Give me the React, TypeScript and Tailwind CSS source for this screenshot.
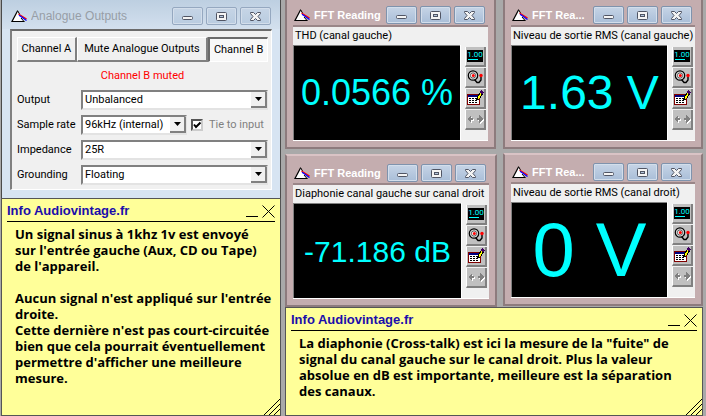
import React, { useState } from 'react';

type Tone = 'blue' | 'rose';

const AppLogo: React.FC = () => (
    <svg width="17" height="13" viewBox="0 0 17 13" className="shrink-0" aria-hidden="true">
        <path d="M6.5 1 L1 11.5 H13 Z" fill="#fff" />
        <path d="M6.5 1 L1 11.5 H13.5" fill="none" stroke="#000" strokeWidth="1.2" />
        <path d="M6.5 0.5 L8.5 4 M10 8 L13 11.5" stroke="#000" />
        <path d="M7.5 4 L15.5 9" stroke="#f00" strokeWidth="1.3" />
        <path d="M8 5.3 L11 7.3 L15.5 10.5" fill="none" stroke="#00f" strokeWidth="1.3" />
    </svg>
);

const CaptionGlyph: React.FC<{ kind: 'min' | 'max' | 'close' }> = ({ kind }) => (
    <svg width="13" height="11" viewBox="0 0 13 11" aria-hidden="true">
        {kind === 'min' && <rect x="1.5" y="5.5" width="10" height="3" rx="1" fill="#f4f4f4" stroke="#505564" />}
        {kind === 'max' && (
            <>
                <rect x="1.5" y="1.5" width="10" height="8" rx="1" fill="#f4f4f4" stroke="#505564" />
                <rect x="4.5" y="4.5" width="4" height="2" fill="#b4c6dc" stroke="#505564" />
            </>
        )}
        {kind === 'close' && (
            <path
                d="M1.5 1.5 H4.5 L6.5 3.5 L8.5 1.5 H11.5 V2.5 L9 5.5 L11.5 8.5 V9.5 H8.5 L6.5 7.5 L4.5 9.5 H1.5 V8.5 L4 5.5 L1.5 2.5 Z"
                fill="#f4f4f4"
                stroke="#505564"
            />
        )}
    </svg>
);

const CaptionButtons: React.FC<{ tone: Tone }> = ({ tone }) => {
    const look =
        tone === 'rose'
            ? 'border-[#7f93ad] from-[#c6d4e6] to-[#a9bed8]'
            : 'border-[#95a8c0] from-[#c6d5e6] to-[#b9cce0]';
    return (
        <div className="flex shrink-0 gap-[3px]">
            {(['min', 'max', 'close'] as const).map((kind) => (
                <button
                    key={kind}
                    type="button"
                    aria-label={kind}
                    className={`flex h-[18px] w-[31px] items-center justify-center rounded-[2px] border bg-linear-to-b shadow-[inset_0_0_0_1px_#d3deeb] ${look}`}
                >
                    <CaptionGlyph kind={kind} />
                </button>
            ))}
        </div>
    );
};

const BellIcon: React.FC = () => (
    <svg width="17" height="14" viewBox="0 0 17 14" aria-hidden="true">
        <circle cx="6" cy="5.5" r="4.7" fill="#d8d8d8" stroke="#000" strokeWidth="1.2" />
        <circle cx="6" cy="5.5" r="2.6" fill="#fff" stroke="#333" strokeWidth="0.8" />
        <circle cx="6.3" cy="5.5" r="1.5" fill="#f00" />
        <path d="M7.5 9.5 L10 12.5 H12 L14 10 V7" fill="none" stroke="#000" strokeWidth="1.4" />
        <circle cx="14" cy="5.5" r="1.7" fill="#f00" />
    </svg>
);

const SheetIcon: React.FC = () => (
    <svg width="17" height="16" viewBox="0 0 17 16" aria-hidden="true" shapeRendering="crispEdges">
        <rect x="0" y="4" width="13" height="11" fill="#800000" />
        <rect x="1" y="5" width="11" height="9" fill="#fff" />
        <rect x="1" y="5" width="11" height="2" fill="#000080" />
        <path d="M2 8.5h9M2 10.5h9M2 12.5h9" stroke="#000" strokeDasharray="2 1" />
        <path d="M9.5 10.5 L10.5 7 L14 1.5 L16 3 L12.5 8.5 Z" fill="#ff0" stroke="#000" />
        <path d="M13.5 1 L16 3.5" stroke="#400060" strokeWidth="2.5" />
    </svg>
);

const ArrowsIcon: React.FC = () => (
    <svg width="17" height="9" viewBox="0 0 17 9" aria-hidden="true" shapeRendering="crispEdges">
        <path d="M1 5 L5 1 V4 H7 V6 H5 V9 Z M17 5 L13 1 V4 H11 V6 H13 V9 Z" fill="#fff" />
        <path d="M0 4 L4 0 V3 H6 V5 H4 V8 Z M16 4 L12 0 V3 H10 V5 H12 V8 Z" fill="#808080" />
    </svg>
);

const ToolButton: React.FC<{ label: string; children: React.ReactNode }> = ({ label, children }) => (
    <button
        type="button"
        aria-label={label}
        className="flex h-5 w-[21px] items-center justify-center border-r-2 border-b-2 border-l border-r-[#808080] border-b-[#808080] border-l-white bg-[#c0c0c0]"
    >
        {children}
    </button>
);

interface ReadingProps {
    title: string;
    label: string;
    value: string;
    valueClass: string;
    className?: string;
    titleClass: string;
}

const ReadingWindow: React.FC<ReadingProps> = ({ title, label, value, valueClass, className = '', titleClass }) => (
    <section className={`border-2 border-[#8d7b7d] bg-[#c4adaf] px-[6px] pb-[6px] ${className}`}>
        <header className={`flex items-center gap-[3px] border-b-2 border-[#9a8688] pr-[3px] pb-px pl-px ${titleClass}`}>
            <AppLogo />
            <h2 className="min-w-0 flex-1 text-[11px] font-bold whitespace-nowrap text-white">{title}</h2>
            <CaptionButtons tone="rose" />
        </header>
        <div className="border-b border-white bg-[#f0f0f0]">
            <p className="h-[18px] pl-[2px] font-['Roboto',sans-serif] text-[11px] leading-[18px] whitespace-nowrap">{label}</p>
            <div className="flex">
                <output
                    className={`flex h-[95px] min-w-0 flex-1 items-center justify-center border-t border-l border-[#808080] bg-black whitespace-nowrap text-[#00ffff] ${valueClass}`}
                >
                    {value}
                </output>
                <div className="flex w-[28px] shrink-0 flex-col gap-px border-l border-white pt-[2px] pl-1">
                    <ToolButton label="Digits">
                        <span className="flex h-[12px] w-[16px] flex-col items-center bg-black font-['Roboto',sans-serif] text-[8px] leading-[9px] text-[#00ffff]">
                            1.00
                            <span className="mr-1 h-px w-[10px] bg-[#00ffff]" />
                        </span>
                    </ToolButton>
                    <ToolButton label="Alarm">
                        <BellIcon />
                    </ToolButton>
                    <ToolButton label="Data">
                        <SheetIcon />
                    </ToolButton>
                    <ToolButton label="Scroll">
                        <ArrowsIcon />
                    </ToolButton>
                </div>
            </div>
        </div>
    </section>
);

const Note: React.FC<{ text: string; className?: string }> = ({ text, className = '' }) => (
    <section className={`relative border border-[#555] bg-[#ffff99] px-[5px] ${className}`}>
        <header className="flex h-[23px] items-center justify-between border-b border-black pt-[2px]">
            <h2 className="text-[13px] font-bold text-[#1a0dab]">Info Audiovintage.fr</h2>
            <div className="flex gap-1">
                <button type="button" aria-label="Minimize">
                    <svg width="12" height="13" viewBox="0 0 12 13" aria-hidden="true">
                        <path d="M0 11.5 H12" stroke="#000" />
                    </svg>
                </button>
                <button type="button" aria-label="Close">
                    <svg width="13" height="13" viewBox="0 0 13 13" aria-hidden="true">
                        <path d="M0.5 0.5 L12.5 12.5 M12.5 0.5 L0.5 12.5" stroke="#000" />
                    </svg>
                </button>
            </div>
        </header>
        <p className="pt-1 pl-2 font-['Open_Sans',sans-serif] text-[13px] leading-4 font-bold whitespace-pre">{text}</p>
        <svg width="16" height="16" viewBox="0 0 16 16" className="absolute right-0 bottom-0" aria-hidden="true">
            <path d="M0 16 L16 0 M5 16 L16 5 M10 16 L16 10" stroke="#000" />
        </svg>
    </section>
);

const Combo: React.FC<{ id: string; options: string[]; className?: string }> = ({ id, options, className = '' }) => (
    <div className={`relative ${className}`}>
        <select
            id={id}
            className="block h-[20px] w-full appearance-none border-2 border-t-[#808080] border-r-[#e3e3e3] border-b-[#e3e3e3] border-l-[#808080] bg-white pl-[2px] text-[11px] leading-4"
        >
            {options.map((o) => (
                <option key={o}>{o}</option>
            ))}
        </select>
        <span className="pointer-events-none absolute inset-y-[2px] right-px flex w-4 items-center justify-center border-r-2 border-b-2 border-[#808080] bg-[#f0f0f0]">
            <svg width="7" height="4" viewBox="0 0 7 4" aria-hidden="true">
                <path d="M0 0 H7 L3.5 4 Z" fill="#000" />
            </svg>
        </span>
    </div>
);

const raised =
    'h-[25px] border-t border-r-2 border-b-2 border-l border-t-white border-r-[#808080] border-b-[#808080] border-l-white bg-[#f0f0f0] whitespace-nowrap';

const AnalogueOutputs: React.FC = () => {
    const [tied, setTied] = useState(true);

    return (
        <section className="border-x border-[#4a4a4a] bg-[#d7e4f2] px-2 pb-2">
            <header className="-mx-2 flex items-center gap-[3px] bg-linear-to-b from-[#bdcfe1] to-[#d3e0ee] pt-[7px] pr-[9px] pb-[4px] pl-[9px]">
                <AppLogo />
                <h2 className="min-w-0 flex-1 truncate text-xs text-[#979ea6]">Analogue Outputs</h2>
                <CaptionButtons tone="blue" />
            </header>
            <div className="border-t-2 border-r border-b border-l-2 border-t-[#6b6b6b] border-r-white border-b-white border-l-[#808080] bg-[#f0f0f0] pt-[6px] pr-[3px] pb-1 pl-[5px] font-['Roboto',sans-serif] text-[11px]">
                <div className="grid grid-cols-[60fr_132fr_60fr]">
                    <button type="button" className={raised}>Channel A</button>
                    <button type="button" className={raised}>Mute Analogue Outputs</button>
                    <button
                        type="button"
                        className="h-[25px] border-t-2 border-r border-b border-l-2 border-t-[#6b6b6b] border-r-white border-b-white border-l-[#6b6b6b] bg-[#f8f8f8] whitespace-nowrap"
                    >
                        Channel B
                    </button>
                </div>
                <p className="py-[6px] text-center leading-4 text-[#f00]">Channel B muted</p>
                <div className="grid grid-cols-[64px_1fr] items-center gap-y-[5px]">
                    <label htmlFor="output">Output</label>
                    <Combo id="output" options={['Unbalanced', 'Balanced']} />
                    <label htmlFor="rate">Sample rate</label>
                    <div className="flex items-center">
                        <Combo id="rate" options={['96kHz (internal)', '48kHz (internal)']} className="w-[106px]" />
                        <label className="ml-1 flex flex-1 items-center gap-[6px] whitespace-nowrap text-[#808080]">
                            <span className="relative flex">
                                <input
                                    type="checkbox"
                                    checked={tied}
                                    onChange={(e) => setTied(e.target.checked)}
                                    className="h-3 w-3 appearance-none border-2 border-t-[#555] border-r-[#ccc] border-b-[#ccc] border-l-[#555] bg-white"
                                />
                                {tied && (
                                    <svg width="12" height="12" viewBox="0 0 12 12" className="pointer-events-none absolute inset-0" aria-hidden="true">
                                        <path d="M3 5.5 L5 8 L9.5 3.5" fill="none" stroke="#000" strokeWidth="2" />
                                    </svg>
                                )}
                            </span>
                            Tie to input
                        </label>
                    </div>
                    <label htmlFor="impedance">Impedance</label>
                    <Combo id="impedance" options={['25R', '50R', '600R']} />
                    <label htmlFor="grounding">Grounding</label>
                    <Combo id="grounding" options={['Floating', 'Grounded']} />
                </div>
            </div>
        </section>
    );
};

const LEFT_NOTE = `Un signal sinus à 1khz 1v est envoyé
sur l'entrée gauche (Aux, CD ou Tape)
de l'appareil.

Aucun signal n'est appliqué sur l'entrée
droite.
Cette dernière n'est pas court-circuitée
bien que cela pourrait éventuellement
permettre d'afficher une meilleure
mesure.`;

const RIGHT_NOTE = `La diaphonie (Cross-talk) est ici la mesure de la "fuite" de
signal du canal gauche sur le canal droit. Plus la valeur
absolue en dB est importante, meilleure est la séparation
des canaux.`;

export default function App() {
    return (
        <main className="grid min-h-screen grid-cols-[280fr_418fr] gap-1 bg-[#a9a9a9] pr-[3px] pl-px font-['Liberation_Sans',Arial,sans-serif] text-black">
            <div className="flex min-w-0 flex-col">
                <AnalogueOutputs />
                <Note text={LEFT_NOTE} className="flex-1" />
            </div>
            <div className="flex min-w-0 flex-col">
                <div className="grid grid-cols-[212fr_200fr] gap-[6px]">
                    <div className="flex min-w-0 flex-col gap-[5px]">
                        <ReadingWindow
                            title="FFT Reading"
                            label="THD (canal gauche)"
                            value="0.0566 %"
                            valueClass="text-[36px]"
                            titleClass="pt-[6px]"
                            className="mr-px border-t-0"
                        />
                        <ReadingWindow
                            title="FFT Reading"
                            label="Diaphonie canal gauche sur canal droit"
                            value="-71.186 dB"
                            valueClass="text-[30px]"
                            titleClass="pt-[8px]"
                            className="border-t-[#d9c3c5]"
                        />
                    </div>
                    <div className="flex min-w-0 flex-col gap-1">
                        <ReadingWindow
                            title="FFT Rea..."
                            label="Niveau de sortie RMS (canal gauche)"
                            value="1.63 V"
                            valueClass="text-[48px]"
                            titleClass="pt-[6px]"
                            className="border-t-0"
                        />
                        <ReadingWindow
                            title="FFT Rea..."
                            label="Niveau de sortie RMS (canal droit)"
                            value="0 V"
                            valueClass="text-[76px]"
                            titleClass="pt-[8px]"
                            className="border-t-[#d9c3c5]"
                        />
                    </div>
                </div>
                <Note text={RIGHT_NOTE} className="flex-1" />
            </div>
        </main>
    );
}
